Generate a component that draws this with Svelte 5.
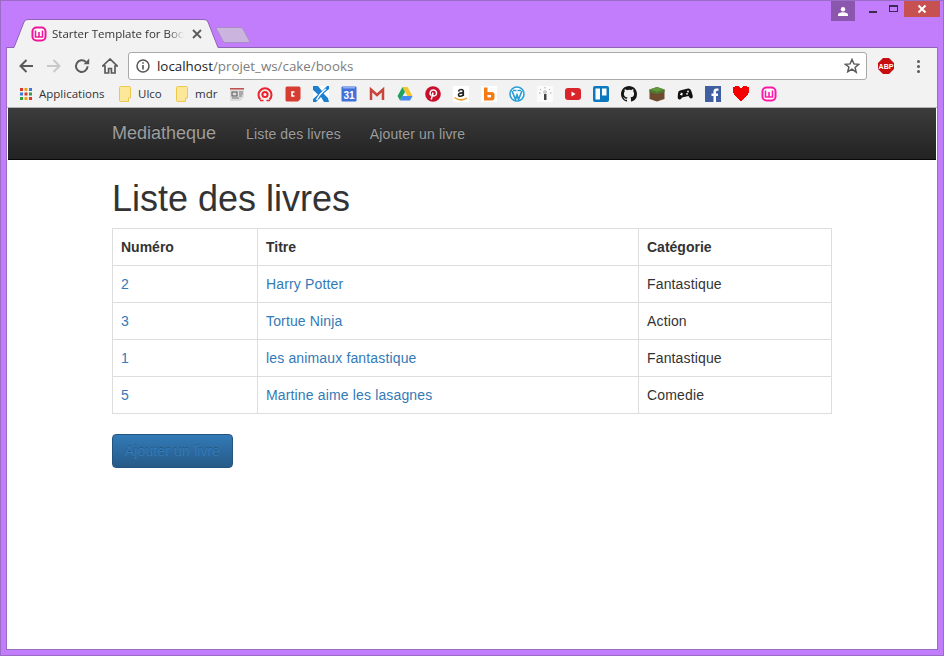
<script>
  const books = [
    { id: 2, title: "Harry Potter", cat: "Fantastique" },
    { id: 3, title: "Tortue Ninja", cat: "Action" },
    { id: 1, title: "les animaux fantastique", cat: "Fantastique" },
    { id: 5, title: "Martine aime les lasagnes", cat: "Comedie" },
  ];
  const appDots = ["#d8392c", "#e8a317", "#3c78d8", "#3c78d8", "#d8392c", "#2f9e44", "#2f9e44", "#e8a317", "#d8392c"];
</script>

<div class="window">
  <div class="titlebar">
    <div class="tab">
      <svg class="tabshape" width="206" height="29" viewBox="0 0 206 29">
        <path d="M0 28.500 L1 28.500 L11 3 Q12 0.500 15 0.500 L191 0.500 Q194 0.500 195 3 L205 28.500 L206 28.500 V29 H0Z" fill="#f2f2f2" />
        <path d="M0 28.500 L1 28.500 L11 3 Q12 0.500 15 0.500 L191 0.500 Q194 0.500 195 3 L205 28.500 L206 28.500" fill="none" stroke="#8f62b5" />
      </svg>
      <svg class="favicon" width="16" height="16" viewBox="0 0 16 16">
        <rect x="0.500" y="0.500" width="15" height="15" rx="5" fill="#f0169b" />
        <rect x="2.500" y="2.500" width="11" height="11" rx="3" fill="#fff" />
        <path d="M4.500 4.500v6.500h7V4.500M8 6v5" fill="none" stroke="#f0169b" stroke-width="1.600" />
      </svg>
      <span class="tabtitle">Starter Template for Boot</span>
      <svg class="tabclose" width="10" height="10" viewBox="0 0 10 10">
        <path d="M1 1l8 8M9 1l-8 8" stroke="#5a5a5a" stroke-width="1.800" />
      </svg>
    </div>
    <svg class="newtab" width="36" height="18" viewBox="0 0 36 18">
      <path d="M1 1.500 L24 1.500 Q26 1.500 27 3 L33.500 15 Q34 16.500 32 16.500 L10 16.500 Q8 16.500 7 15 L0.500 3 Q0 1.500 1 1.500Z" fill="#cbb4dd" stroke="#a98cc4" />
    </svg>
    <div class="controls">
      <div class="profile">
        <svg width="10" height="9" viewBox="0 0 10 9">
          <circle cx="5" cy="2.300" r="2.200" fill="#fff" />
          <path d="M0 9 V7.500 Q0.500 5.500 5 5.300 Q9.500 5.500 10 7.500 V9Z" fill="#fff" />
        </svg>
      </div>
      <div class="min"></div>
      <div class="max"></div>
      <div class="close">
        <svg width="10" height="10" viewBox="0 0 10 10">
          <path d="M1.500 1.500l7 7M8.500 1.500l-7 7" stroke="#fff" stroke-width="2" />
        </svg>
      </div>
    </div>
  </div>

  <div class="browser">
    <div class="toolbar">
      <svg class="tool" width="16" height="16" viewBox="0 0 16 16">
        <path d="M15 8H3M8.500 2L2.500 8 8.500 14" fill="none" stroke="#5a5a5a" stroke-width="2" />
      </svg>
      <svg class="tool" width="16" height="16" viewBox="0 0 16 16">
        <path d="M1 8h12M7.500 2L13.500 8 7.500 14" fill="none" stroke="#c9c9c9" stroke-width="2" />
      </svg>
      <svg class="tool" width="16" height="16" viewBox="0 0 16 16">
        <path d="M13.600 8.200a5.800 5.800 0 1 1-1.700-4.200" fill="none" stroke="#5a5a5a" stroke-width="2" />
        <path d="M9.600 6.200h5.600V0.600z" fill="#5a5a5a" />
      </svg>
      <svg class="tool" width="16" height="16" viewBox="0 0 16 16">
        <path d="M8 1L0.800 8H3v7h3.600v-4.500h2.800V15H13V8h2.200z" fill="none" stroke="#5a5a5a" stroke-width="1.700" />
      </svg>
      <div class="omnibox">
        <svg width="14" height="14" viewBox="0 0 14 14">
          <circle cx="7" cy="7" r="6" fill="none" stroke="#555" stroke-width="1.500" />
          <path d="M7 6v4.400M7 3.200v1.600" stroke="#555" stroke-width="1.600" />
        </svg>
        <span class="url"><b>localhost</b>/projet_ws/cake/books</span>
        <svg class="star" width="16" height="16" viewBox="0 0 16 16">
          <path d="M8 1.500l1.900 4.400 4.800.4-3.600 3.200 1.100 4.700L8 11.200l-4.200 2.500 1.100-4.700L1.300 6.300l4.800-.4z" fill="none" stroke="#5a5a5a" stroke-width="1.500" />
        </svg>
      </div>
      <svg class="abp" width="16" height="16" viewBox="0 0 16 16">
        <path d="M5 0h6L16 5v6L11 16H5L0 11V5z" fill="#c70d0d" />
        <text x="8" y="10.800" text-anchor="middle" class="abptext">ABP</text>
      </svg>
      <div class="dots"><i></i><i></i><i></i></div>
    </div>

    <div class="bookmarks">
      <div class="bm apps">
        <svg width="14" height="14" viewBox="0 0 14 14">
          {#each appDots as c, i}
            <rect x={1 + (i % 3) * 4.500} y={1 + Math.floor(i / 3) * 4.500} width="3" height="3" fill={c} />
          {/each}
        </svg>
        <span>Applications</span>
      </div>
      <div class="bm ulco">
        <svg class="folder" width="12" height="16" viewBox="0 0 12 16">
          <path d="M0.500 1.500Q0.500 0.500 1.500 0.500H10.500Q11.500 0.500 11.500 1.500V12H9.500V15.500H1.500Q0.500 15.500 0.500 14.500Z" fill="#fde89a" stroke="#eec74e" />
        </svg>
        <span>Ulco</span>
      </div>
      <div class="bm mdr">
        <svg class="folder" width="12" height="16" viewBox="0 0 12 16">
          <path d="M0.500 1.500Q0.500 0.500 1.500 0.500H10.500Q11.500 0.500 11.500 1.500V12H9.500V15.500H1.500Q0.500 15.500 0.500 14.500Z" fill="#fde89a" stroke="#eec74e" />
        </svg>
        <span>mdr</span>
      </div>
      <div class="favs">
        <!-- news -->
        <svg width="16" height="16" viewBox="0 0 16 16">
          <path d="M1 2H15V11L11 15H1Z" fill="#dcdcdc" />
          <rect x="1" y="2" width="14" height="1.500" fill="#c0504d" />
          <rect x="3" y="6" width="5" height="4" fill="none" stroke="#555" />
          <path d="M10 6h4M10 8h4M10 10h3M3 12h7" stroke="#777" />
        </svg>
        <!-- at sign -->
        <svg width="16" height="16" viewBox="0 0 16 16">
          <path d="M3.500 13.500A6.500 6.500 0 1 1 12.500 13.500" fill="none" stroke="#e8242c" stroke-width="2" />
          <circle cx="8" cy="8.500" r="2.600" fill="none" stroke="#e8242c" stroke-width="2" />
          <path d="M3 14.500h3.500M9.500 14.500h3.500" stroke="#e8242c" stroke-width="1.500" />
        </svg>
        <!-- C badge -->
        <svg width="16" height="16" viewBox="0 0 16 16">
          <path d="M2 0.500H14Q15.500 0.500 15.500 2V13L13 15.500H2Q0.500 15.500 0.500 14V2Q0.500 0.500 2 0.500Z" fill="#d63c2f" />
          <path d="M9.500 6H7V10H9.500" fill="none" stroke="#fff" stroke-width="1.600" />
        </svg>
        <!-- blue x -->
        <svg width="16" height="16" viewBox="0 0 16 16">
          <rect x="0" y="0" width="16" height="16" fill="#fff" />
          <path d="M0 0H5L9 5 14 0H16V3L10.500 7.500 15 12 16 16H11L8 11 3 16H0V13L5 8.500 0 4Z" fill="#1d7fd0" />
          <path d="M13 3C9 6 6 9 3.500 14" fill="none" stroke="#fff" stroke-width="1.500" />
        </svg>
        <!-- calendar -->
        <svg width="16" height="16" viewBox="0 0 16 16">
          <rect x="0.500" y="0.500" width="15" height="15" rx="1" fill="#3f71d8" />
          <rect x="2" y="0.500" width="12" height="2" fill="#8eaef0" />
          <text x="8" y="12.800" text-anchor="middle" class="cal">31</text>
        </svg>
        <!-- gmail -->
        <svg width="16" height="16" viewBox="0 0 16 16">
          <path d="M2 14V3.500L8 9 14 3.500V14" fill="#ededed" stroke="#c9453a" stroke-width="2.500" />
        </svg>
        <!-- drive -->
        <svg width="16" height="16" viewBox="0 0 16 16">
          <path d="M5.500 1H10.500L15.500 10H10.500Z" fill="#f6c42c" />
          <path d="M5.500 1L0.500 10 3 14.500 8 6Z" fill="#1ea362" />
          <path d="M5.500 10H15.500L13 14.500H3Z" fill="#4688f1" />
        </svg>
        <!-- pinterest -->
        <svg width="16" height="16" viewBox="0 0 16 16">
          <circle cx="8" cy="8" r="7.800" fill="#c8102e" />
          <path d="M6 9.500C4 7 5.500 4 8.300 4 11 4 12 6 11.300 8.300 10.700 10 8.700 10.500 7.700 9.300M8 6.500L6.300 13.500" fill="none" stroke="#fff" stroke-width="1.500" />
        </svg>
        <!-- amazon -->
        <svg width="16" height="16" viewBox="0 0 16 16">
          <rect width="16" height="16" fill="#fff" />
          <path d="M5.500 5.500Q6 3.500 8 3.500 10.300 3.500 10.300 5.500V10M10.300 7Q5.500 6.500 5.500 8.800 5.500 10.500 7.500 10.200 9.500 10 10.300 8.500" fill="none" stroke="#222" stroke-width="1.600" />
          <path d="M1.500 11.500Q8 16 14 12" fill="none" stroke="#f29a1f" stroke-width="1.500" />
        </svg>
        <!-- b -->
        <svg width="16" height="16" viewBox="0 0 16 16">
          <rect width="16" height="16" fill="#fff" />
          <path d="M3 1.500H6.500V6H10.500Q13.500 6 13.500 8.500V11.500Q13.500 14.500 10.500 14.500H3Z" fill="#f47b16" />
          <rect x="6.500" y="9" width="3.500" height="2.400" fill="#fff" />
        </svg>
        <!-- wordpress -->
        <svg width="16" height="16" viewBox="0 0 16 16">
          <circle cx="8" cy="8" r="7" fill="#fff" stroke="#2a9fd6" stroke-width="1.600" />
          <path d="M3 5L6.500 13.500 8 9 9.500 13.500 13 5M4 4.500H7.500M8.500 4.500H12" fill="none" stroke="#2a9fd6" stroke-width="1.700" />
        </svg>
        <!-- lamp -->
        <svg width="16" height="16" viewBox="0 0 16 16">
          <rect width="16" height="16" fill="#fbfbfb" />
          <circle cx="8" cy="6" r="2" fill="#ccc" />
          <rect x="7" y="8" width="2.500" height="6" fill="#444" />
          <path d="M3 3l1 1M13 3l-1 1M8 1v1.500M2 7h1.500M13 7h1.500" stroke="#aaa" />
        </svg>
        <!-- youtube -->
        <svg width="16" height="16" viewBox="0 0 16 16">
          <rect y="2" width="16" height="12" rx="3" fill="#d9252a" />
          <path d="M6.500 5.500v5L10.500 8z" fill="#fff" />
        </svg>
        <!-- trello -->
        <svg width="16" height="16" viewBox="0 0 16 16">
          <rect width="16" height="16" rx="2" fill="#0b79bf" />
          <rect x="2.500" y="2.500" width="4.500" height="11" fill="#fff" />
          <rect x="9" y="2.500" width="4.500" height="7" fill="#fff" />
        </svg>
        <!-- github -->
        <svg width="16" height="16" viewBox="0 0 16 16">
          <path d="M8 0C3.580 0 0 3.580 0 8c0 3.540 2.290 6.530 5.470 7.590.4.070.55-.17.55-.38v-1.340c-2.230.48-2.700-1.070-2.700-1.070-.36-.92-.89-1.170-.89-1.170-.73-.5.050-.49.050-.49.800.06 1.230.83 1.230.83.710 1.220 1.870.87 2.330.66.070-.52.280-.87.510-1.070-1.780-.2-3.640-.89-3.640-3.950 0-.87.310-1.590.83-2.150-.08-.2-.36-1.020.08-2.120 0 0 .67-.21 2.200.82A7.600 7.600 0 0 1 8 3.870c.68 0 1.360.09 2 .27 1.530-1.040 2.200-.82 2.200-.82.440 1.100.16 1.920.08 2.120.51.560.82 1.270.82 2.150 0 3.070-1.870 3.750-3.650 3.950.29.250.54.730.54 1.480v2.190c0 .21.150.46.550.38A8.010 8.010 0 0 0 16 8c0-4.420-3.580-8-8-8z" fill="#161616" />
        </svg>
        <!-- minecraft block -->
        <svg width="16" height="16" viewBox="0 0 16 16">
          <path d="M8 1L15.500 3.500V13L8 15.500 0.500 13V3.500Z" fill="#6e4a2e" />
          <path d="M8 1L15.500 3.500 8 6 0.500 3.500Z" fill="#5f9b3c" />
          <path d="M0.500 3.500L8 6V8L0.500 6ZM15.500 3.500L8 6V8L15.500 6Z" fill="#4b7a30" />
        </svg>
        <!-- gamepad -->
        <svg width="16" height="16" viewBox="0 0 16 16">
          <path d="M3 4.500L11 2.500Q13.500 2 14.300 5L15.800 10Q16 12.500 14 12.500 12.800 12.500 11.500 10L5 11.500Q4 14 2.300 13.500 0.500 13 0.700 11L1 7.500Q1 5 3 4.500Z" fill="#111" />
          <path d="M3 8.500l3-.7M4.200 6.700l.6 2.800" stroke="#fff" />
          <circle cx="11" cy="5.500" r="0.900" fill="#fff" />
          <circle cx="10" cy="7.800" r="0.900" fill="#fff" />
        </svg>
        <!-- facebook -->
        <svg width="16" height="16" viewBox="0 0 16 16">
          <rect width="16" height="16" fill="#3f5fa0" />
          <path d="M11 16V10H13V7.500H11V6Q11 4.700 12.300 4.700H13.500V2.500H11.500Q8.500 2.500 8.500 5.500V7.500H6.500V10H8.500V16Z" fill="#fff" />
        </svg>
        <!-- heart -->
        <svg width="16" height="16" viewBox="0 0 16 16">
          <path d="M2 0H6V1H7V2H9V1H10V0H14V1H16V7H15V9H14V10H13V11H12V12H11V13H10V14H9V15H7V14H6V13H5V12H4V11H3V10H2V9H1V7H0V1H2Z" fill="#f40000" />
        </svg>
        <!-- wamp -->
        <svg width="16" height="16" viewBox="0 0 16 16">
          <rect x="0.500" y="0.500" width="15" height="15" rx="5" fill="#ff18a8" />
          <rect x="2.500" y="2.500" width="11" height="11" rx="3" fill="#fff" />
          <path d="M4.500 4.500v6.500h7V4.500M8 6v5" fill="none" stroke="#ff18a8" stroke-width="1.600" />
        </svg>
      </div>
    </div>

    <div class="page">
      <nav class="navbar">
        <div class="container navrow">
          <span class="brand">Mediatheque</span>
          <span class="navlink">Liste des livres</span>
          <span class="navlink">Ajouter un livre</span>
        </div>
      </nav>
      <main class="container main">
        <h1>Liste des livres</h1>
        <table>
          <thead>
            <tr><th class="c1">Numéro</th><th class="c2">Titre</th><th>Catégorie</th></tr>
          </thead>
          <tbody>
            {#each books as b (b.id)}
              <tr>
                <td><span class="link">{b.id}</span></td>
                <td><span class="link">{b.title}</span></td>
                <td>{b.cat}</td>
              </tr>
            {/each}
          </tbody>
        </table>
        <button type="button" class="btn">Ajouter un livre</button>
      </main>
    </div>
  </div>
</div>

<style>
  :global(body) {
    margin: 0;
  }
  .window {
    box-sizing: border-box;
    width: 944px;
    height: 656px;
    display: flex;
    flex-direction: column;
    background: #c27dfc;
    border: 1px solid #9a6cc6;
    padding: 0 5px 5px;
    font-family: "Liberation Sans", Arial, sans-serif;
    font-size: 14px;
    color: #333;
    overflow: hidden;
  }
  .titlebar {
    position: relative;
    z-index: 1;
    display: flex;
    align-items: flex-end;
    height: 46px;
    flex: none;
    padding-left: 7px;
  }
  .tab {
    position: relative;
    width: 206px;
    height: 29px;
    display: flex;
    align-items: center;
    margin-bottom: -1px;
    padding: 1px 0 0 18px;
    box-sizing: border-box;
    font-family: "Open Sans", "Noto Sans", sans-serif;
    font-size: 11.500px;
    color: #333;
  }
  .tabshape {
    position: absolute;
    left: 0;
    top: 0;
  }
  .favicon,
  .tabtitle,
  .tabclose {
    position: relative;
    flex: none;
  }
  .tabtitle {
    width: 132px;
    margin: -2px 0 0 5px;
    white-space: nowrap;
    -webkit-mask-image: linear-gradient(to right, #000 88%, transparent);
    mask-image: linear-gradient(to right, #000 88%, transparent);
  }
  .tabclose {
    margin-left: 8px;
  }
  .newtab {
    margin: 0 0 3px -3px;
  }
  .controls {
    position: absolute;
    top: 0;
    right: -2px;
    display: flex;
    align-items: flex-start;
  }
  .profile {
    width: 24px;
    height: 20px;
    margin-right: 14px;
    background: #8b57ae;
    display: flex;
    align-items: center;
    justify-content: center;
  }
  .min {
    width: 8px;
    height: 2px;
    margin: 10px 12px 0 0;
    background: #3d2a50;
  }
  .max {
    width: 7px;
    height: 4px;
    margin: 4px 6px 0 0;
    border: 1px solid #3d2a50;
    border-top-width: 2px;
  }
  .close {
    width: 36px;
    height: 16px;
    background: #c75050;
    display: flex;
    align-items: center;
    justify-content: center;
  }
  .browser {
    flex: 1;
    min-height: 0;
    display: flex;
    flex-direction: column;
    border: solid #9a6cc6;
    border-width: 0 1px 1px;
  }
  .toolbar {
    flex: none;
    box-sizing: border-box;
    height: 34px;
    background: #f2f2f2;
    border-top: 1px solid #8f62b5;
    display: flex;
    align-items: center;
    padding: 3px 0 0 11px;
  }
  .tool {
    flex: none;
    margin-right: 12px;
  }
  .omnibox {
    box-sizing: border-box;
    width: 739px;
    height: 28px;
    margin-left: -2px;
    background: #fff;
    border: 1px solid #a9a9a9;
    border-radius: 3px;
    display: flex;
    align-items: center;
    padding: 0 6px 0 7px;
    flex: none;
  }
  .url {
    margin-left: 7px;
    font-family: "Open Sans", "Noto Sans", sans-serif;
    font-size: 13.350px;
    color: #7d7d7d;
    flex: 1;
    white-space: nowrap;
  }
  .url b {
    font-weight: 400;
    color: #222;
  }
  .star {
    flex: none;
  }
  .abp {
    flex: none;
    margin-left: 11px;
  }
  .abptext {
    font-family: "Liberation Sans", sans-serif;
    font-size: 7px;
    font-weight: 700;
    fill: #fff;
  }
  .cal {
    font-family: "Liberation Sans", sans-serif;
    font-size: 10px;
    font-weight: 700;
    fill: #fff;
  }
  .dots {
    margin-left: 23px;
    display: flex;
    flex-direction: column;
    gap: 2px;
  }
  .dots i {
    display: block;
    width: 3px;
    height: 3px;
    border-radius: 50%;
    background: #5a5a5a;
  }
  .bookmarks {
    flex: none;
    height: 26px;
    background: #f2f2f2;
    display: flex;
    align-items: center;
    padding-left: 12px;
    font-family: "Open Sans", "Noto Sans", sans-serif;
    font-size: 11.500px;
    color: #333;
  }
  .bm {
    display: flex;
    align-items: center;
    flex: none;
  }
  .bm span {
    margin-top: -2px;
    white-space: nowrap;
  }
  .apps {
    width: 100px;
    gap: 6px;
  }
  .ulco {
    width: 57px;
    gap: 7px;
  }
  .mdr {
    width: 53px;
    gap: 7px;
  }
  .favs {
    display: flex;
    gap: 12px;
    flex: none;
  }
  .page {
    flex: 1;
    background: #fff;
    min-height: 0;
    border-top: 1px solid #b5b5b5;
  }
  .navbar {
    height: 52px;
    margin: 0 1px;
    box-sizing: border-box;
    background: linear-gradient(to bottom, #3c3c3c, #222);
    border-bottom: 1px solid #080808;
  }
  .container {
    box-sizing: border-box;
    width: 720px;
    margin-left: 104px;
  }
  .main {
    margin-left: 105px;
  }
  .navrow {
    display: flex;
    align-items: center;
    height: 51px;
  }
  .brand {
    font-size: 18px;
    color: #9d9d9d;
    margin-right: 30px;
    text-shadow: 0 -1px 0 rgba(0, 0, 0, 0.25);
  }
  .navlink {
    color: #9d9d9d;
    margin-right: 29px;
    letter-spacing: 0.130px;
    text-shadow: 0 -1px 0 rgba(0, 0, 0, 0.25);
  }
  h1 {
    margin: 19px 0 9px;
    font-size: 36px;
    font-weight: 500;
    line-height: 39.600px;
    color: #333;
  }
  table {
    width: 720px;
    border-collapse: collapse;
    table-layout: fixed;
    margin-bottom: 20px;
  }
  th,
  td {
    border: 1px solid #ddd;
    padding: 8px;
    line-height: 20px;
    text-align: left;
  }
  td {
    letter-spacing: 0.150px;
  }
  th {
    font-weight: 700;
  }
  .c1 {
    width: 145px;
    box-sizing: border-box;
  }
  .c2 {
    width: 381px;
    box-sizing: border-box;
  }
  .link {
    color: #337ab7;
  }
  .btn {
    display: block;
    box-sizing: border-box;
    width: 121px;
    height: 34px;
    padding: 6px 0;
    border: 1px solid #245580;
    border-radius: 4px;
    background: linear-gradient(to bottom, #337ab7, #265a88);
    color: #337ab7;
    font-family: inherit;
    font-size: 14px;
    letter-spacing: 0.130px;
    line-height: 20px;
    text-shadow: 0 -1px 0 rgba(0, 0, 0, 0.2);
    white-space: nowrap;
  }
</style>
